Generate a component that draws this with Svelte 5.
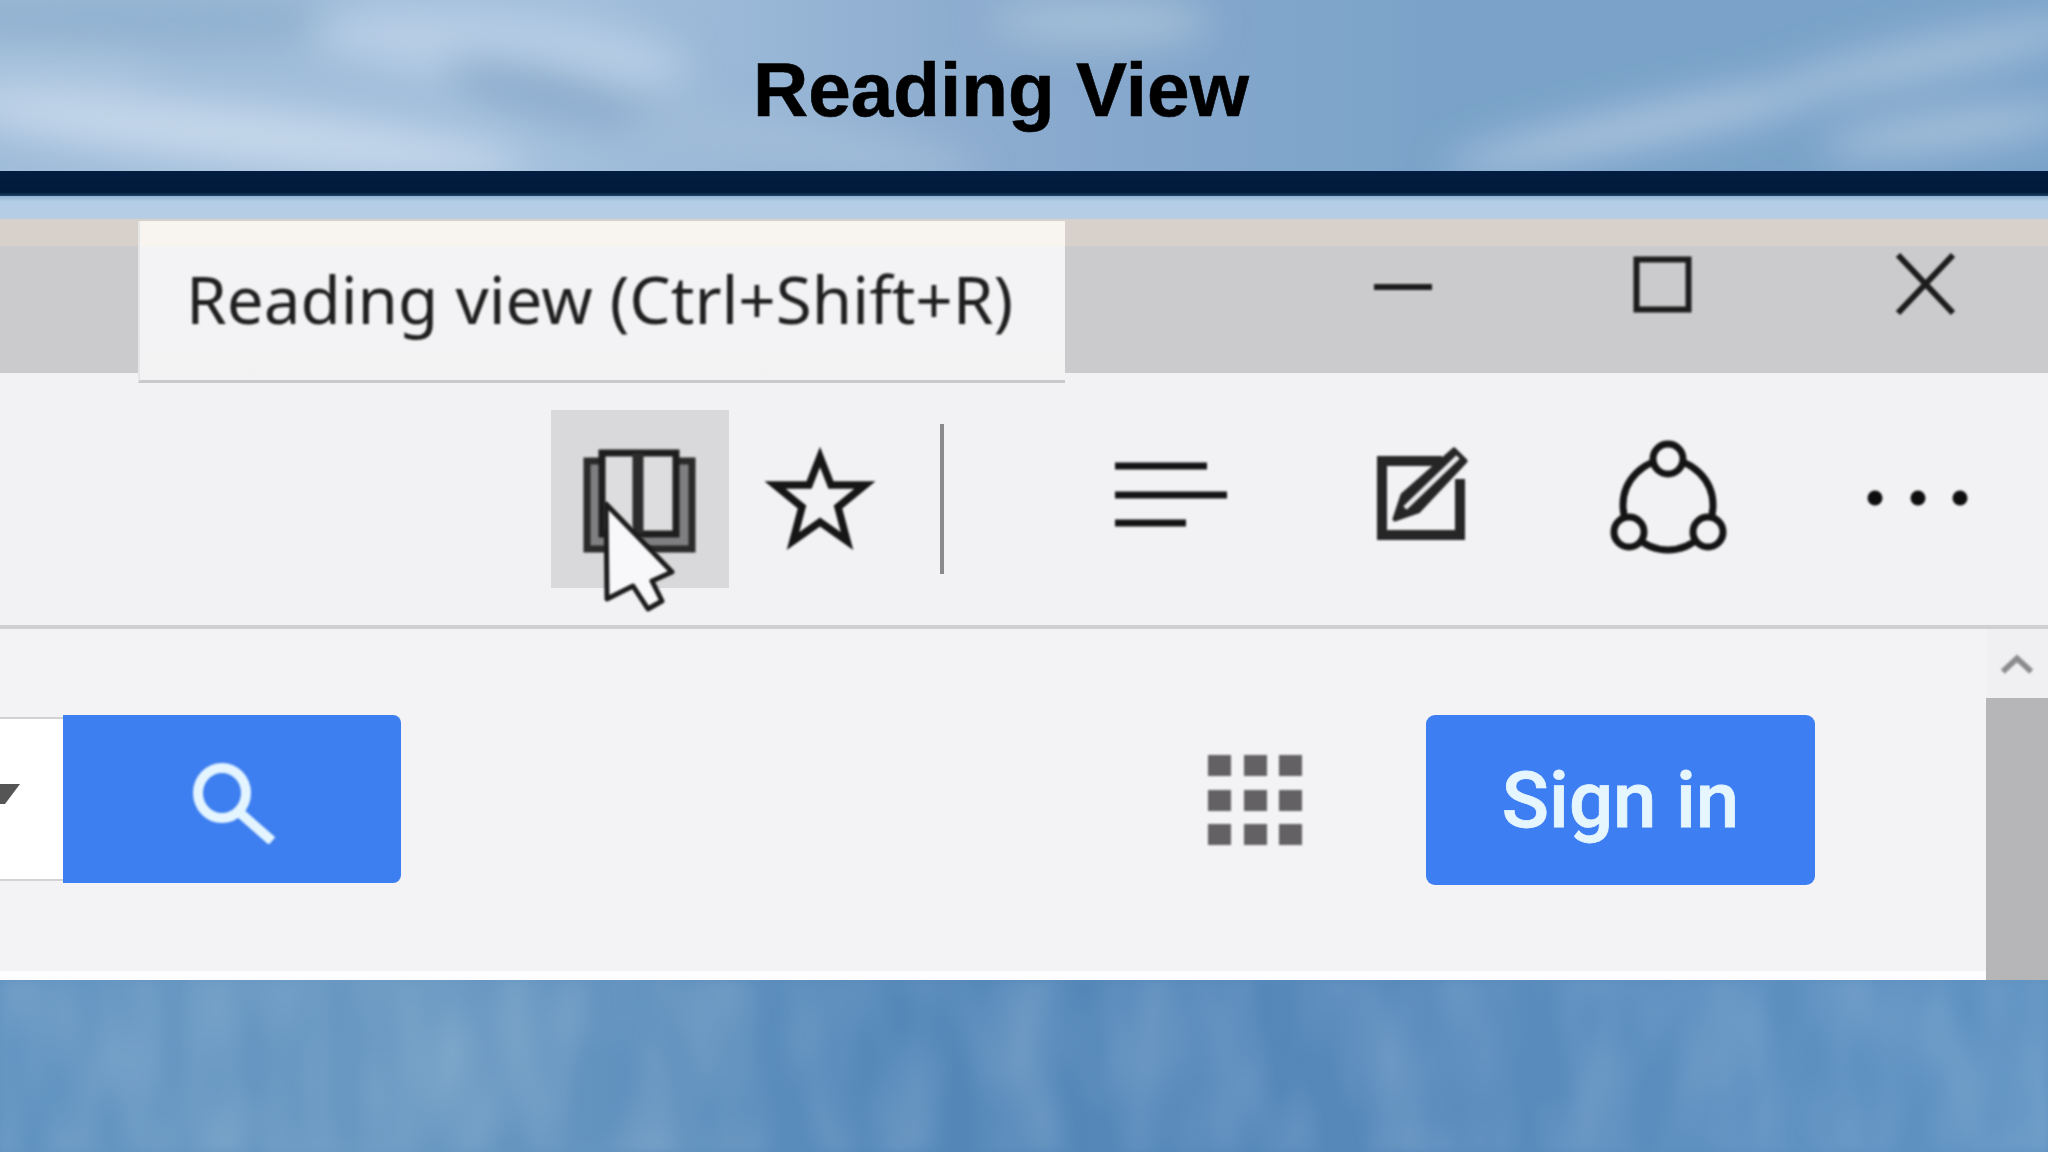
<script>
  const appCells = Array.from({ length: 9 });
</script>

<div class="slide">
  <!-- SKY HEADER -->
  <header class="hero">
    <svg class="sky" viewBox="0 0 2048 171" preserveAspectRatio="none" aria-hidden="true">
      <defs>
        <filter id="soft" filterUnits="userSpaceOnUse" x="-300" y="-300" width="2648" height="771">
          <feGaussianBlur stdDeviation="19" />
        </filter>
      </defs>
      <g filter="url(#soft)">
        <ellipse cx="150" cy="20" rx="260" ry="24" fill="#8eb0cf" />
        <ellipse cx="500" cy="48" rx="190" ry="34" fill="#b8cee5" transform="rotate(6 500 48)" />
        <ellipse cx="240" cy="135" rx="290" ry="30" fill="#c4d7ea" transform="rotate(6 240 135)" />
        <ellipse cx="40" cy="70" rx="120" ry="22" fill="#a9c3dd" />
        <ellipse cx="560" cy="95" rx="120" ry="24" fill="#8babcc" transform="rotate(14 560 95)" />
        <ellipse cx="800" cy="145" rx="180" ry="20" fill="#a3bdd9" transform="rotate(8 800 145)" />
        <ellipse cx="1100" cy="22" rx="110" ry="24" fill="#a3bfd8" />
        <ellipse cx="1650" cy="125" rx="210" ry="18" fill="#adc6df" transform="rotate(-12 1650 125)" />
        <ellipse cx="1930" cy="58" rx="170" ry="20" fill="#a4c0da" transform="rotate(-12 1930 58)" />
        <ellipse cx="1950" cy="130" rx="130" ry="18" fill="#a8c2dc" transform="rotate(-8 1950 130)" />
      </g>
    </svg>
    <h1>Reading View</h1>
  </header>
  <div class="rule"></div>
  <div class="band"></div>

  <!-- BROWSER -->
  <section class="browser">
    <div class="titlebar">
      <div class="tooltip"><span>Reading view (Ctrl+Shift+R)</span></div>

      <svg class="win win-min" viewBox="0 0 60 70" aria-hidden="true">
        <path d="M1 37h58" stroke="#1c1c1c" stroke-width="6" />
      </svg>
      <svg class="win win-max" viewBox="0 0 65 70" aria-hidden="true">
        <rect x="6.5" y="9.5" width="52" height="50" fill="none" stroke="#1c1c1c" stroke-width="6" />
      </svg>
      <svg class="win win-close" viewBox="0 0 65 70" aria-hidden="true">
        <path d="M5 5l55 58M60 5L5 63" stroke="#1c1c1c" stroke-width="6" fill="none" />
      </svg>
    </div>

    <div class="toolbar">
      <div class="tool active">
        <svg class="ico book" viewBox="0 0 120 160" aria-hidden="true">
          <rect x="7" y="42" width="105" height="88" fill="#7f7e80" stroke="#2a2a2a" stroke-width="7" />
          <rect x="22" y="34" width="74" height="81" fill="#dddcde" stroke="#1e1e1e" stroke-width="7" />
          <path d="M58 34v81" stroke="#2c2c2c" stroke-width="11" />
        </svg>
        <svg class="cursor" viewBox="0 0 80 115" aria-hidden="true">
          <path d="M5 4L71 72 51 81 61 101 47 109 32 86 6 99Z" fill="#f8f8fa" stroke="#1c1c1c" stroke-width="5" stroke-linejoin="round" />
        </svg>
      </div>
      <div class="tool star-tool">
        <svg class="ico star" viewBox="0 0 110 160" aria-hidden="true">
          <path d="M55 38L66 66H100L73 88 82 122 55 103 28 122 37 88 10 66H44Z" fill="none" stroke="#161616" stroke-width="7.5" stroke-linejoin="miter" />
        </svg>
      </div>
      <div class="sep"></div>
      <svg class="ico hub" viewBox="0 0 122 160" aria-hidden="true">
        <path d="M5 47h92M5 76h112M5 104h71" stroke="#141414" stroke-width="7" fill="none" />
      </svg>
      <svg class="ico note" viewBox="0 0 100 160" aria-hidden="true">
        <path d="M72 42H12v74h78V60" fill="none" stroke="#262626" stroke-width="10" />
        <path d="M25 100L33 76 84 31 95 42 48 92Z" fill="#262626" stroke="#262626" stroke-width="5" stroke-linejoin="round" />
        <path d="M35 89L88 38" stroke="#e8e7ea" stroke-width="5" />
      </svg>
      <svg class="ico share" viewBox="0 0 120 160" aria-hidden="true">
        <circle cx="58" cy="86" r="45" fill="none" stroke="#141414" stroke-width="7" />
        <circle cx="58" cy="40" r="15" fill="#f2f1f4" stroke="#141414" stroke-width="7" />
        <circle cx="19" cy="113" r="15" fill="#f2f1f4" stroke="#141414" stroke-width="7" />
        <circle cx="98" cy="113" r="15" fill="#f2f1f4" stroke="#141414" stroke-width="7" />
      </svg>
      <svg class="ico more" viewBox="0 0 115 160" aria-hidden="true">
        <circle cx="15" cy="79" r="7.5" fill="#0e0e0e" />
        <circle cx="58" cy="79" r="7.5" fill="#0e0e0e" />
        <circle cx="100" cy="79" r="7.5" fill="#0e0e0e" />
      </svg>
    </div>

    <div class="page">
      <div class="content">
        <div class="search-input">
          <svg class="caret" viewBox="0 0 20 20" aria-hidden="true"><path d="M0 0H20L5 20H0Z" fill="#555" /></svg>
        </div>
        <button class="search-btn" aria-label="Search">
          <svg viewBox="0 0 90 90" aria-hidden="true">
            <ellipse cx="35" cy="39" rx="24" ry="25" fill="none" stroke="#e4f5ff" stroke-width="10" />
            <path d="M52 58L85 87" stroke="#e4f5ff" stroke-width="10" />
          </svg>
        </button>
        <div class="apps">
          {#each appCells as _}
            <span></span>
          {/each}
        </div>
        <button class="signin">Sign in</button>
      </div>
      <div class="scrollbar">
        <div class="scroll-up">
          <svg viewBox="0 0 40 24" aria-hidden="true"><path d="M5 20L20 6 35 20" fill="none" stroke="#8b8b8d" stroke-width="6" /></svg>
        </div>
        <div class="thumb"></div>
      </div>
    </div>
  </section>

  <!-- SKY FOOTER -->
  <footer class="water">
    <svg class="sky" viewBox="0 0 2048 172" preserveAspectRatio="none" aria-hidden="true">
      <defs>
        <filter id="grain" x="0" y="0" width="100%" height="100%">
          <feTurbulence type="fractalNoise" baseFrequency="0.016 0.007" numOctaves="2" seed="7" />
          <feColorMatrix values="0 0 0 0 0.6  0 0 0 0 0.74  0 0 0 0 0.85  0.4 0 0 0 -0.14" />
          <feGaussianBlur stdDeviation="4" />
        </filter>
      </defs>
      <rect width="2048" height="172" filter="url(#grain)" />
    </svg>
  </footer>
</div>

<style>
  :global(body) {
    margin: 0;
    background: #5a8cbd;
  }

  .slide {
    width: 2048px;
    height: 1152px;
    display: flex;
    flex-direction: column;
    overflow: hidden;
  }

  /* HEADER */
  .hero {
    position: relative;
    height: 171px;
    flex: none;
    background: linear-gradient(90deg, #a0bcd9 0%, #a3bfdc 28%, #8eaed0 46%, #86a8cc 55%, #7ba3c9 70%, #7ba3c9 100%);
    box-sizing: border-box;
    padding-left: 753px;
  }
  .sky {
    position: absolute;
    inset: 0;
    width: 100%;
    height: 100%;
  }
  h1 {
    position: relative;
    margin: 0;
    padding-top: 47px;
    font-family: "Liberation Sans", sans-serif;
    font-weight: 700;
    font-size: 76.5px;
    line-height: 86px;
    color: #000;
    white-space: nowrap;
    -webkit-text-stroke: 0.6px #000;
  }

  .rule {
    height: 25px;
    flex: none;
    background: linear-gradient(180deg, #021d40 0%, #011a3a 85%, #1d4468 100%);
  }
  .band {
    height: 23px;
    flex: none;
    background: linear-gradient(180deg, #8fb2d2 0%, #b4cde6 25%, #b6cde4 100%);
  }

  /* BROWSER CHROME */
  .browser {
    flex: none;
    display: flex;
    flex-direction: column;
  }
  .titlebar {
    position: relative;
    height: 154px;
    flex: none;
    display: flex;
    align-items: flex-start;
    box-sizing: border-box;
    padding: 31px 0 0 1373px;
    background: linear-gradient(180deg, #d8d0ca 0, #d8d0ca 26px, #cbcbcd 28px, #cbcbcd 100%);
  }
  .tooltip {
    position: absolute;
    left: 138px;
    top: 2px;
    width: 927px;
    height: 162px;
    box-sizing: border-box;
    display: flex;
    align-items: center;
    padding: 0 0 3px 46px;
    background: linear-gradient(180deg, #f8f4ef 0, #f8f4ef 24px, #f3f3f6 27px, #f3f2f3 100%);
    border-bottom: 3px solid #c9c9cb;
    border-left: 2px solid #e6e6e8;
    z-index: 2;
  }
  .tooltip span {
    font-family: "Noto Sans", sans-serif;
    font-size: 65.5px;
    line-height: 1;
    color: #1f1f1f;
    white-space: nowrap;
    filter: blur(0.9px);
  }
  .win {
    height: 70px;
    flex: none;
    filter: blur(0.8px);
  }
  .win-min { width: 60px; }
  .win-max { width: 65px; margin-left: 197px; }
  .win-close { width: 65px; margin-left: 198px; }

  .toolbar {
    height: 256px;
    flex: none;
    box-sizing: border-box;
    display: flex;
    align-items: center;
    padding-left: 551px;
    background: #f2f1f4;
    border-bottom: 4px solid #d0d0d2;
  }
  .tool {
    position: relative;
    height: 178px;
    display: flex;
    align-items: center;
    justify-content: center;
    flex: none;
  }
  .tool.active {
    width: 178px;
    background: #d9d8da;
  }
  .star-tool { width: 182px; }
  .ico {
    height: 160px;
    flex: none;
    filter: blur(1px);
  }
  .book { width: 120px; }
  .star { width: 110px; }
  .cursor {
    position: absolute;
    left: 50px;
    top: 90px;
    width: 80px;
    height: 115px;
    filter: blur(0.8px);
  }
  .sep {
    width: 4px;
    height: 150px;
    margin-left: 29px;
    background: #8a8a8c;
    flex: none;
    filter: blur(0.6px);
  }
  .hub { width: 122px; margin-left: 166px; }
  .note { width: 100px; margin-left: 138px; }
  .share { width: 120px; margin-left: 140px; }
  .more { width: 115px; margin-left: 130px; }

  /* PAGE */
  .page {
    height: 351px;
    flex: none;
    display: flex;
  }
  .content {
    flex: 1;
    display: flex;
    align-items: flex-start;
    box-sizing: border-box;
    padding-top: 86px;
    background: #f3f2f4;
    border-bottom: 9px solid #fdfcfe;
  }
  .search-input {
    width: 63px;
    height: 164px;
    margin-top: 2px;
    box-sizing: border-box;
    display: flex;
    align-items: center;
    background: #fff;
    border-top: 2px solid #d2d2d2;
    border-bottom: 2px solid #d2d2d2;
    flex: none;
  }
  .caret {
    width: 20px;
    height: 20px;
    margin-bottom: 10px;
  }
  .search-btn {
    width: 338px;
    height: 168px;
    flex: none;
    display: flex;
    align-items: center;
    justify-content: center;
    padding: 0;
    border: 0;
    border-radius: 0 8px 8px 0;
    background: #3d7ef0;
  }
  .search-btn svg {
    width: 90px;
    height: 90px;
    filter: blur(0.8px);
  }
  .apps {
    width: 94px;
    margin: 40px 0 0 807px;
    display: grid;
    grid-template-columns: repeat(3, 23px);
    grid-auto-rows: 21px;
    justify-content: space-between;
    row-gap: 13.5px;
    flex: none;
    filter: blur(1px);
  }
  .apps span {
    background: #636163;
  }
  .signin {
    width: 389px;
    height: 170px;
    margin-left: 124px;
    flex: none;
    padding: 0;
    border: 0;
    border-radius: 9px;
    background: #3d7ef3;
    font-family: Roboto, sans-serif;
    white-space: nowrap;
    color: #e6f6ff;
    font-weight: 500;
    font-size: 78px;
    -webkit-text-stroke: 0.8px #e6f6ff;
  }
  .scrollbar {
    width: 62px;
    flex: none;
    display: flex;
    flex-direction: column;
    background: #f0f0f2;
  }
  .scroll-up {
    height: 69px;
    flex: none;
    display: flex;
    align-items: center;
    justify-content: center;
  }
  .scroll-up svg {
    width: 38px;
    height: 24px;
    filter: blur(0.8px);
  }
  .thumb {
    flex: 1;
    background: #b6b5b7;
  }

  /* FOOTER */
  .water {
    position: relative;
    flex: 1;
    background: linear-gradient(90deg, #6193c0 0%, #6a99c2 20%, #5487b8 45%, #5688ba 65%, #6093c2 100%);
  }
</style>
